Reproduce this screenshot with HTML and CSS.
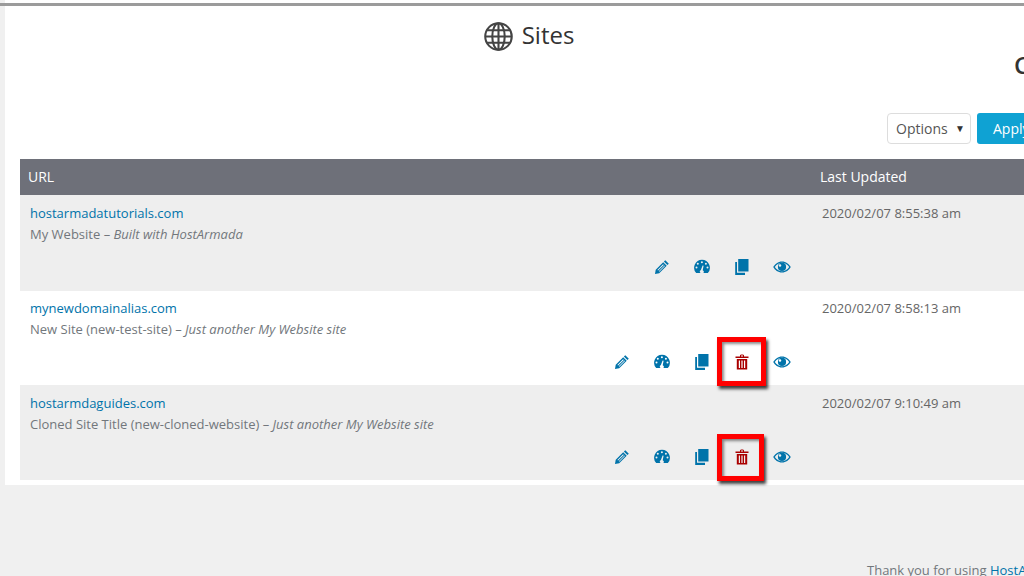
FILE: index.html
```html
<!DOCTYPE html>
<html lang="en">
<head>
<meta charset="utf-8">
<title>Sites</title>
<link rel="stylesheet" href="styles.css">
</head>
<body>
<svg class="defs" width="0" height="0" aria-hidden="true">
  <symbol id="i-pencil" viewBox="0 0 16 16">
    <path d="M11.3 1.2 14.8 4.7 13.4 6.1 9.9 2.6Z"/>
    <path fill-rule="evenodd" d="M9.2 3.3 12.7 6.8 5.2 14.3 1 15 1.7 10.8ZM9.1 5.2 3.4 10.9 4.1 11.6 9.8 5.9ZM10.5 6.5 4.8 12.2 5.3 12.7 11 7Z"/>
  </symbol>
  <symbol id="i-gauge" viewBox="0 0 16 16">
    <path fill-rule="evenodd" d="M8 .8A7.9 7.9 0 0 0 2.2 14H6.6A1.9 1.9 0 0 1 6.9 11L8.6 6.4 9.6 6.8 8.7 11.2A1.9 1.9 0 0 1 9.4 14H13.800A7.900 7.900 0 0 0 8 .8ZM7.900 2.300A1 1 0 1 1 7.900 4.300 1 1 0 0 1 7.900 2.300ZM3.800 3.800A1 1 0 1 1 3.800 5.800 1 1 0 0 1 3.800 3.800ZM11.900 3.800A1 1 0 1 1 11.900 5.800 1 1 0 0 1 11.900 3.800ZM2.500 7.500A1 1 0 1 1 2.500 9.500 1 1 0 0 1 2.500 7.500ZM13.500 7.500A1 1 0 1 1 13.500 9.500 1 1 0 0 1 13.500 7.500Z"/>
  </symbol>
  <symbol id="i-copy" viewBox="0 0 16 16">
    <path d="M4.200 0H14.500V12.500H4.200Z"/>
    <path d="M1.200 3H3V13.800H11V16H1.200Z"/>
  </symbol>
  <symbol id="i-trash" viewBox="0 0 16 16">
    <path fill-rule="evenodd" d="M6 1.200C6 .2 10 .2 10 1.200V2.400H14.500V3.900H1.500V2.400H6ZM7 2.400H9V1.400H7Z"/>
    <path fill-rule="evenodd" d="M2.800 4.900H13.200V15.500H2.800ZM4.800 6.400V14H6V6.400ZM7.400 6.400V14H8.600V6.400ZM10 6.400V14H11.200V6.400Z"/>
  </symbol>
  <symbol id="i-eye" viewBox="0 0 18 12">
    <path fill-rule="evenodd" d="M9 .5C5 .5 2 3 .2 6 2 9 5 11.500 9 11.500S16 9 17.800 6C16 3 13 .5 9 .5ZM9 1.700C6 1.700 3.500 3.600 1.800 6 3.500 8.400 6 10.300 9 10.300S14.500 8.400 16.200 6C14.500 3.600 12 1.700 9 1.700Z"/>
    <path fill-rule="evenodd" d="M9 1.800A4.100 4.100 0 1 0 9 10 4.100 4.100 0 0 0 9 1.800ZM7 3.200A1.300 1.300 0 1 1 7 5.800 1.300 1.300 0 0 1 7 3.200Z"/>
  </symbol>
</svg>

<main class="panel">
  <h1 class="title">
    <svg class="globe" viewBox="0 0 28 28" aria-hidden="true">
      <circle cx="14" cy="14" r="12.800"/>
      <ellipse cx="14" cy="14" rx="6" ry="12.800"/>
      <path d="M14 1.200V26.800M1.200 14H26.800M3 8H25M3 20H25"/>
    </svg>
    <span>Sites</span>
  </h1>
  <div class="clipped-letter">C</div>

  <div class="bulk">
    <div class="select">Options<span class="caret">▼</span></div>
    <button class="apply" type="button">Apply</button>
  </div>

  <div class="table">
    <div class="row head">
      <div class="col-url">URL</div>
      <div class="col-date">Last Updated</div>
    </div>

    <div class="row site alt h96">
      <div class="col-url">
        <a class="link" href="#">hostarmadatutorials.com</a>
        <p class="desc">My Website – <em>Built with HostArmada</em></p>
        <div class="actions">
          <svg class="ico"><use href="#i-pencil"/></svg>
          <svg class="ico"><use href="#i-gauge"/></svg>
          <svg class="ico"><use href="#i-copy"/></svg>
          <svg class="ico eye"><use href="#i-eye"/></svg>
        </div>
      </div>
      <div class="col-date stamp">2020/02/07 8:55:38 am</div>
    </div>

    <div class="row site h94">
      <div class="col-url">
        <a class="link" href="#">mynewdomainalias.com</a>
        <p class="desc">New Site (new-test-site) – <em>Just another My Website site</em></p>
        <div class="actions">
          <svg class="ico"><use href="#i-pencil"/></svg>
          <svg class="ico"><use href="#i-gauge"/></svg>
          <svg class="ico"><use href="#i-copy"/></svg>
          <svg class="ico del"><use href="#i-trash"/></svg>
          <svg class="ico eye"><use href="#i-eye"/></svg>
        </div>
      </div>
      <div class="col-date stamp">2020/02/07 8:58:13 am</div>
    </div>

    <div class="row site alt h95">
      <div class="col-url">
        <a class="link" href="#">hostarmdaguides.com</a>
        <p class="desc">Cloned Site Title (new-cloned-website) – <em>Just another My Website site</em></p>
        <div class="actions">
          <svg class="ico"><use href="#i-pencil"/></svg>
          <svg class="ico"><use href="#i-gauge"/></svg>
          <svg class="ico"><use href="#i-copy"/></svg>
          <svg class="ico del"><use href="#i-trash"/></svg>
          <svg class="ico eye"><use href="#i-eye"/></svg>
        </div>
      </div>
      <div class="col-date stamp">2020/02/07 9:10:49 am</div>
    </div>
  </div>
</main>

<div class="mark mark-a"></div>
<div class="mark mark-b"></div>

<footer class="foot">Thank you for using <a class="foot-link" href="#">HostArmada</a></footer>
</body>
</html>
```

FILE: styles.css
```css
html, body {
  margin: 0;
  height: 576px;
  width: 1024px;
  overflow: hidden;
}
body {
  position: relative;
  background: #f0f0f0;
  font-family: "Open Sans", sans-serif;
  font-size: 13px;
  color: #72777c;
}
.defs { position: absolute; }
.panel {
  box-sizing: border-box;
  width: 1400px;
  height: 485px;
  margin-left: 5px;
  padding: 3px 0 0;
  background: #fff;
  position: relative;
}
.panel::before {
  content: "";
  display: block;
  height: 3px;
  background: #9b9b9b;
  margin-left: -5px;
}
.title {
  display: flex;
  align-items: center;
  justify-content: center;
  gap: 9px;
  width: 1100px;
  margin: 14px 0 0;
  height: 30px;
  font-size: 24px;
  font-weight: 400;
  line-height: 30px;
  color: #333;
  transform: translateX(-26px);
}
.globe {
  width: 29px;
  height: 29px;
  fill: none;
  stroke: #444;
  stroke-width: 2;
  margin-top: 3px;
}
.clipped-letter {
  position: absolute;
  left: 1009px;
  top: 50px;
  font-size: 24px;
  line-height: 30px;
  font-weight: 600;
  color: #333;
}
.bulk {
  display: flex;
  gap: 6px;
  margin: 63px 0 0 882px;
  height: 31px;
}
.select {
  box-sizing: border-box;
  width: 84px;
  height: 31px;
  border: 1px solid #ddd;
  border-radius: 4px;
  padding: 0 8px;
  font-size: 14px;
  line-height: 29px;
  color: #555;
  background: #fff;
  position: relative;
}
.caret {
  position: absolute;
  right: 5px;
  top: 0;
  font-size: 10px;
  color: #333;
}
.apply {
  width: 80px;
  height: 31px;
  border: 0;
  border-radius: 3px;
  background: #0fa2d3;
  color: #fff;
  font: 14px "Open Sans", sans-serif;
  text-align: left;
  padding: 0 16px;
}
.table {
  margin: 15px 0 0 15px;
}
.row {
  display: flex;
}
.head {
  height: 36px;
  background: #6e7079;
  color: #fff;
  font-size: 14px;
  line-height: 36px;
  font-weight: 400;
}
.head .col-url { padding-left: 8px; }
.head .col-date { padding-left: 8px; }
.col-url {
  box-sizing: border-box;
  width: 792px;
  flex: none;
}
.col-date { flex: 1; }
.site .col-url { padding: 8px 0 0 10px; position: relative; }
.stamp { padding: 8px 0 0 10px; line-height: 20px; color: #666; }
.h96 { height: 96px; }
.h94 { height: 94px; }
.h95 { height: 95px; }
.h94 .col-url, .h94 .stamp { padding-top: 7px; }
.alt { background: #eee; }
.link {
  display: block;
  color: #0073aa;
  text-decoration: none;
  line-height: 20px;
}
.desc {
  margin: 1px 0 0;
  line-height: 20px;
}
.actions {
  position: absolute;
  right: 20px;
  bottom: 15px;
  display: flex;
  gap: 24px;
  align-items: center;
}
.h96 .actions { bottom: 16px; }
.ico {
  width: 16px;
  height: 16px;
  fill: #0073aa;
  display: block;
}
.ico.eye { width: 18px; height: 12px; margin-left: -1px; }
.ico.del { fill: #a00; }
.actions .ico:last-child { margin-right: 1px; }
.mark {
  position: absolute;
  box-sizing: border-box;
  border: 5px solid #f00;
  box-shadow: 2px 3px 3px rgba(0, 0, 0, .75), inset 2px 2px 3px rgba(0, 0, 0, .45);
}
.mark-a { left: 717px; top: 337px; width: 49px; height: 49px; }
.mark-b { left: 717px; top: 434px; width: 47px; height: 47px; }
.foot {
  position: absolute;
  left: 867px;
  top: 560px;
  white-space: nowrap;
  line-height: 20px;
}
.foot-link { color: #0073aa; text-decoration: none; }
```
